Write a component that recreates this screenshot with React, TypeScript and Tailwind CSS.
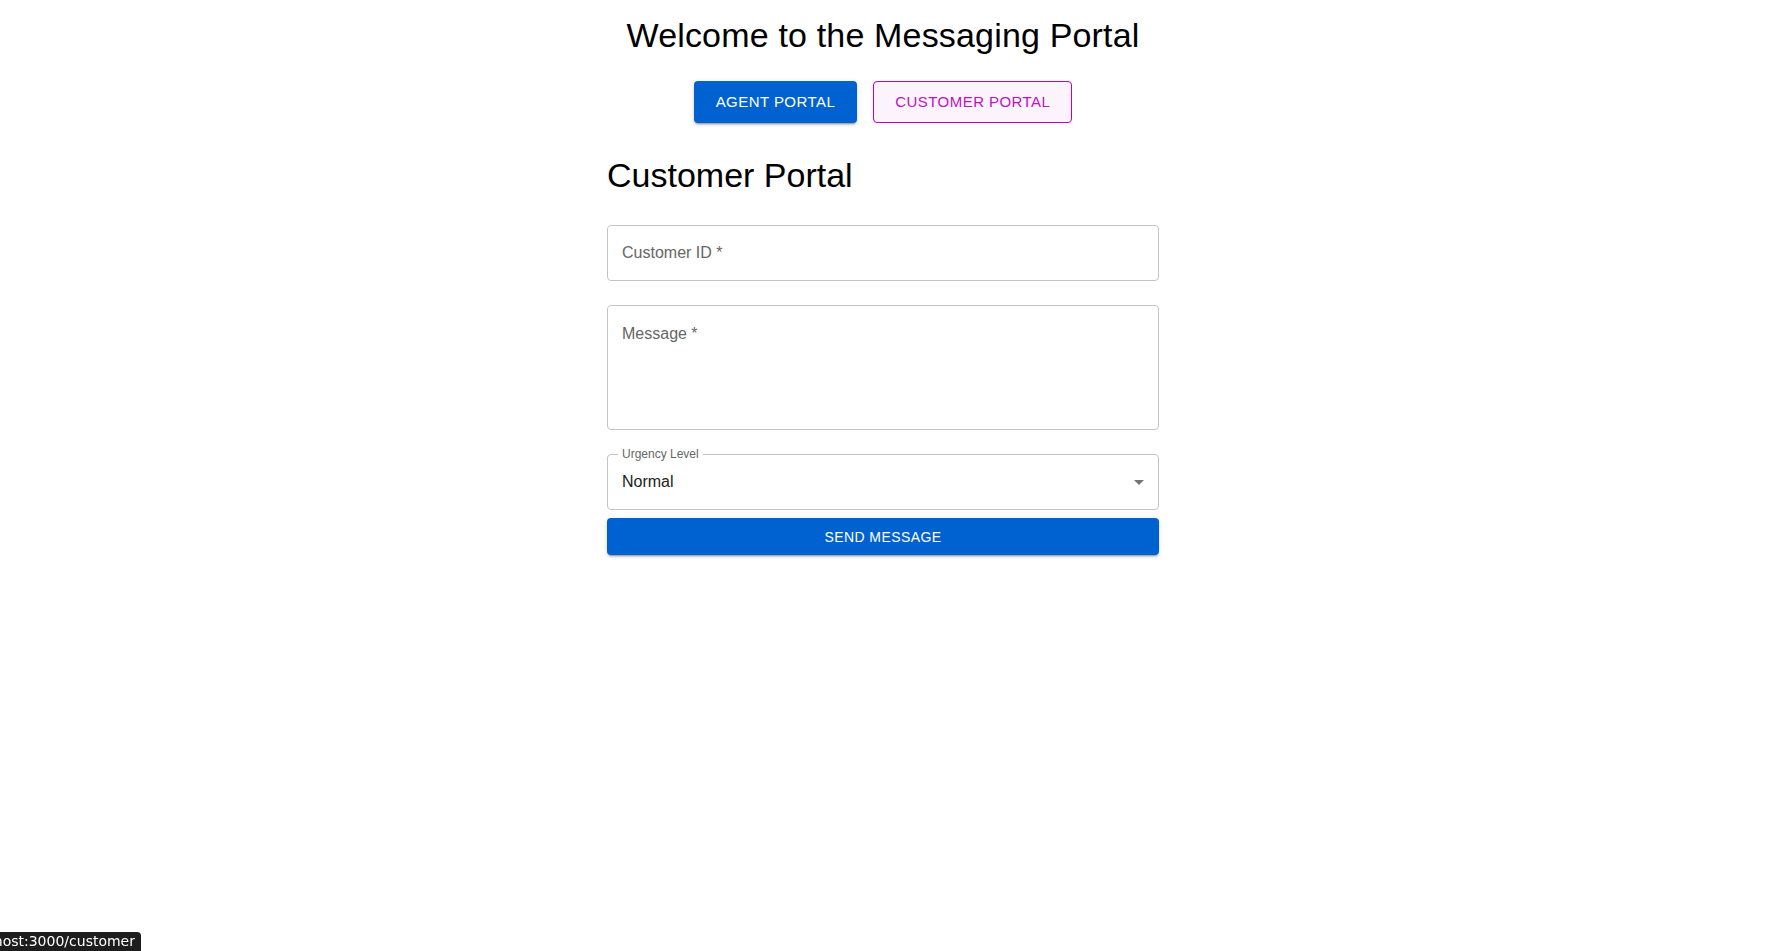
import React from "react";

export default function App() {
  return (
    <div className="relative min-h-screen bg-white pr-[10px] font-['Liberation_Sans',Arial,sans-serif] text-black">
      {/* Header */}
      <h1 className="pt-[14px] text-center text-[34px] leading-[42px] font-normal tracking-[0.005em]">
        Welcome to the Messaging Portal
      </h1>

      {/* Portal switch */}
      <div className="mt-[25px] flex justify-center gap-4">
        <button className="h-[42px] rounded px-[22px] bg-[#0062d1] text-white text-[15px] uppercase tracking-[0.03em] shadow-[0_3px_1px_-2px_rgba(0,0,0,0.2),0_2px_2px_0_rgba(0,0,0,0.14),0_1px_5px_0_rgba(0,0,0,0.12)]">
          Agent Portal
        </button>
        <button className="h-[42px] rounded px-[21px] border border-[#c000c0] bg-[#fcf4fc] text-[#c010c0] text-[15px] uppercase tracking-[0.03em]">
          Customer Portal
        </button>
      </div>

      {/* Form */}
      <div className="mx-auto flex w-[600px] flex-col px-6">
        <h2 className="mt-[31px] mb-[13px] text-[34px] leading-[42px] font-normal">
          Customer Portal
        </h2>

        <div className="mt-4 mb-2 flex h-14 items-center rounded border border-[#c4c4c4] px-[14px]">
          <span className="text-base text-[#666]">Customer ID *</span>
        </div>

        <div className="mt-4 mb-2 h-[125px] rounded border border-[#c4c4c4] px-[14px] pt-[16px]">
          <span className="text-base leading-[23px] text-[#666]">Message *</span>
        </div>

        <div className="relative mt-4 mb-2 flex h-14 items-center rounded border border-[#c4c4c4] pl-[14px] pr-[7px]">
          <span className="absolute -top-[8px] left-[10px] bg-white px-[4px] text-xs leading-[14px] text-[#666]">
            Urgency Level
          </span>
          <span className="flex-1 text-base text-[#212121]">Normal</span>
          <svg viewBox="0 0 24 24" className="h-6 w-6 fill-[#757575]">
            <path d="M7 10l5 5 5-5z" />
          </svg>
        </div>

        <button className="h-[37px] w-full rounded bg-[#0062d1] text-sm uppercase tracking-[0.03em] text-white shadow-[0_3px_1px_-2px_rgba(0,0,0,0.2),0_2px_2px_0_rgba(0,0,0,0.14),0_1px_5px_0_rgba(0,0,0,0.12)]">
          Send Message
        </button>
      </div>

      {/* Browser status bubble */}
      <div className="fixed bottom-0 left-0 flex h-[19px] w-[141px] justify-end overflow-hidden rounded-tr bg-[#1d1d1d] pr-[6px] font-['DejaVu_Sans',sans-serif] text-[14px] leading-[19px] text-white">
        <span className="whitespace-nowrap">localhost:3000/customer</span>
      </div>
    </div>
  );
}
